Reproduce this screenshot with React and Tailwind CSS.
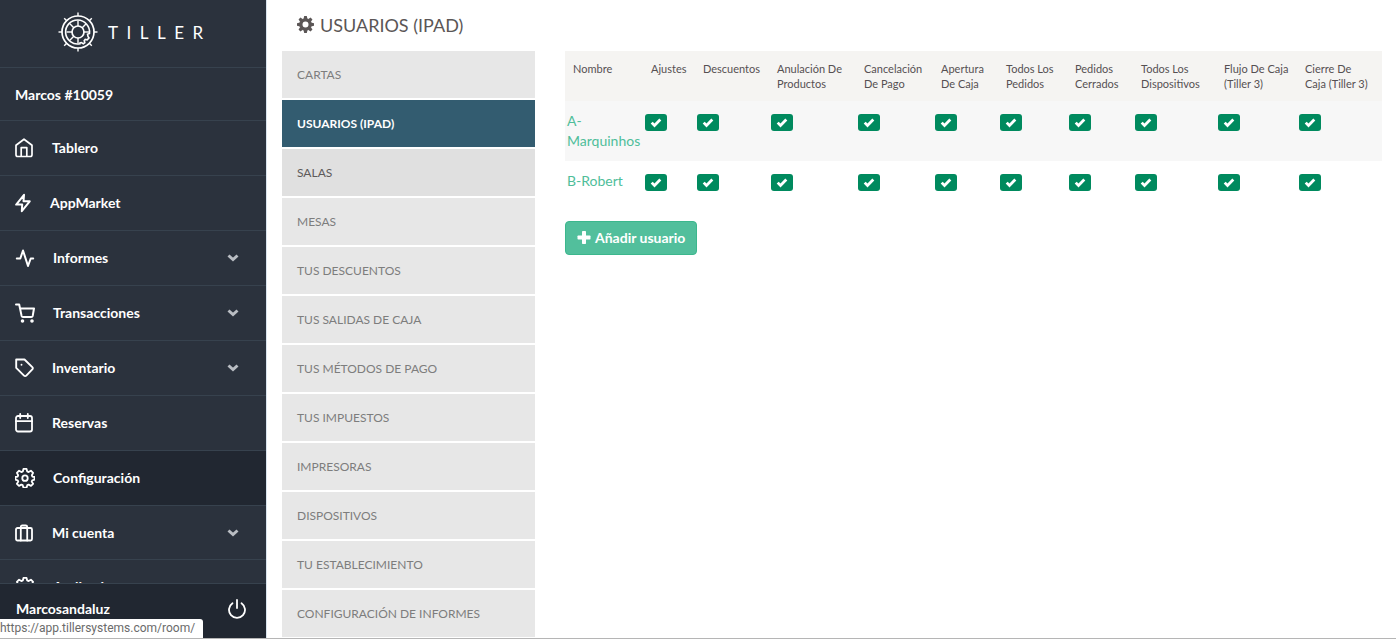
const menuItems = [
  { label: 'Tablero', icon: HomeIcon },
  { label: 'AppMarket', icon: BoltIcon },
  { label: 'Informes', icon: ActivityIcon, expandable: true },
  { label: 'Transacciones', icon: CartIcon, expandable: true },
  { label: 'Inventario', icon: TagIcon, expandable: true },
  { label: 'Reservas', icon: CalendarIcon },
  { label: 'Configuración', icon: GearIcon, active: true },
  { label: 'Mi cuenta', icon: CaseIcon, expandable: true, compact: true },
  { label: 'Auditoria', icon: GearIcon, compact: true },
]

const sections = [
  { label: 'CARTAS' },
  { label: 'USUARIOS (IPAD)', state: 'current' },
  { label: 'SALAS', state: 'highlighted' },
  { label: 'MESAS' },
  { label: 'TUS DESCUENTOS' },
  { label: 'TUS SALIDAS DE CAJA' },
  { label: 'TUS MÉTODOS DE PAGO' },
  { label: 'TUS IMPUESTOS' },
  { label: 'IMPRESORAS' },
  { label: 'DISPOSITIVOS' },
  { label: 'TU ESTABLECIMIENTO' },
  { label: 'CONFIGURACIÓN DE INFORMES' },
]

const sectionStyles = {
  current: 'bg-[#335c70] font-bold text-white',
  highlighted: 'bg-[#e0e0e0] text-[#5e5a5a]',
  normal: 'bg-[#e7e7e7] text-[#7d7d7d]',
}

const permissions = [
  { lines: ['Ajustes'], width: 'w-[52px]' },
  { lines: ['Descuentos'], width: 'w-[74px]' },
  { lines: ['Anulación De', 'Productos'], width: 'w-[87px]' },
  { lines: ['Cancelación', 'De Pago'], width: 'w-[77px]' },
  { lines: ['Apertura', 'De Caja'], width: 'w-[65px]' },
  { lines: ['Todos Los', 'Pedidos'], width: 'w-[69px]' },
  { lines: ['Pedidos', 'Cerrados'], width: 'w-[66px]' },
  { lines: ['Todos Los', 'Dispositivos'], width: 'w-[83px]' },
  { lines: ['Flujo De Caja', '(Tiller 3)'], width: 'w-[81px]' },
  { lines: ['Cierre De', 'Caja (Tiller 3)'], width: 'w-[85px]' },
]

const users = ['A-Marquinhos', 'B-Robert']

function Icon({ width, height = 20, strokeWidth = 2, className = '', children }) {
  return (
    <svg
      width={width}
      height={height}
      viewBox={`0 0 ${width} ${height}`}
      fill="none"
      stroke="currentColor"
      strokeWidth={strokeWidth}
      strokeLinecap="round"
      strokeLinejoin="round"
      aria-hidden="true"
      className={`shrink-0 ${className}`}
    >
      {children}
    </svg>
  )
}

function HomeIcon() {
  return (
    <Icon width={19} strokeWidth={1.7}>
      <path d="M1 7.3 9 1.2l8 6.100v9.500c0 1-.8 1.700-1.800 1.700H2.800C1.800 18.500 1 17.800 1 16.800z" />
      <path d="M6.200 18.200V9.600h5.600v8.600" />
    </Icon>
  )
}

function BoltIcon() {
  return (
    <Icon width={17} strokeWidth={2}>
      <path d="M9 1.800 1.200 11.600h6L6.800 18.200l7.900-9.900H8.500z" />
    </Icon>
  )
}

function ActivityIcon() {
  return (
    <Icon width={20}>
      <path d="M1.800 10.500h3.500L8 2.500l5 15.500 2.700-7.500h2.500" />
    </Icon>
  )
}

function CartIcon() {
  return (
    <Icon width={20}>
      <path d="M1 1.500h3.200l2.400 11.400c.2.700.7 1.100 1.400 1.100h8.300c.7 0 1.200-.4 1.400-1.100L19 5.500H5" />
      <circle cx="7.500" cy="18" r=".8" fill="currentColor" />
      <circle cx="17" cy="18" r=".8" fill="currentColor" />
    </Icon>
  )
}

function TagIcon() {
  return (
    <Icon width={19} strokeWidth={1.9}>
      <path d="M1.200 1.500h8.300l7.800 7.600c.7.700.7 1.600 0 2.300l-6 6.200c-.7.700-1.600.7-2.300 0L1.200 9.800z" />
      <path d="M6.500 6.700h.01" />
    </Icon>
  )
}

function CalendarIcon() {
  return (
    <Icon width={19} strokeWidth={1.8}>
      <rect x="1" y="3" width="16" height="15.500" rx="2" />
      <path d="M1 8.200h16M5.200 1v4M12.800 1v4" />
    </Icon>
  )
}

function GearIcon() {
  return (
    <svg
      width="20"
      height="20"
      viewBox="1 1 22 22"
      fill="none"
      stroke="currentColor"
      strokeWidth="2"
      strokeLinejoin="round"
      aria-hidden="true"
      className="shrink-0"
    >
      <path d="M10.300 2h3.400l.7 2.800 1.600.7 2.500-1.500L20.900 6.400 19.500 8.900l.6 1.500 2.400.5v3l-2.500.6-.6 1.500 1.500 2.400-2.300 2.300-2.600-1.400-1.500.6-.8 2.700h-3.400l-.8-2.700-1.500-.6-2.600 1.400-2.300-2.300 1.500-2.400-.6-1.500-2.500-.6v-3l2.400-.5.6-1.500-1.400-2.500L5.500 4l2.500 1.500 1.600-.7z" />
      <circle cx="12" cy="12.200" r="3" />
    </svg>
  )
}

function CaseIcon() {
  return (
    <Icon width={19} strokeWidth={1.8}>
      <rect x="1" y="5" width="16" height="12.500" rx="1.500" />
      <path d="M5.800 17.500V4c0-.8.6-1.500 1.500-1.500h3.400c.9 0 1.500.7 1.500 1.500v13.500" />
    </Icon>
  )
}

function ChevronIcon() {
  return (
    <Icon width={12} height={10} strokeWidth={3} className="text-[#b9bdc3]">
      <path strokeLinecap="butt" strokeLinejoin="miter" d="m1.500 2.500 4.500 4 4.500-4" />
    </Icon>
  )
}

function PowerIcon() {
  return (
    <Icon width={18} strokeWidth={1.8}>
      <path d="M9 1v8" />
      <path d="M4.500 4.200a8 8 0 1 0 9 0" />
    </Icon>
  )
}

function CheckIcon() {
  return (
    <svg
      width="12"
      height="10"
      viewBox="0 0 12 10"
      fill="none"
      stroke="currentColor"
      strokeWidth="2.800"
      aria-hidden="true"
      className="relative hidden text-white peer-checked:block"
    >
      <path d="m1.700 4.600 2.800 2.900 5.800-5.900" />
    </svg>
  )
}

function PlusIcon() {
  return (
    <svg width="14" height="14" viewBox="0 0 14 14" fill="currentColor" aria-hidden="true">
      <rect x="5" y="0" width="4" height="13" rx=".7" />
      <rect x=".5" y="4.500" width="13" height="4" rx=".7" />
    </svg>
  )
}

function CogIcon() {
  const teeth = [0, 45, 90, 135, 180, 225, 270, 315]
  return (
    <svg width="17" height="17" viewBox="-8.500 -8.500 17 17" fill="currentColor" aria-hidden="true">
      <circle r="4.600" fill="none" stroke="currentColor" strokeWidth="3.200" />
      {teeth.map((angle) => (
        <path key={angle} transform={`rotate(${angle})`} d="M-2-5.500-1.300-8.500h2.600L2-5.500z" />
      ))}
    </svg>
  )
}

function WheelLogo() {
  const spokes = [0, 45, 90, 135, 180, 225, 270, 315]
  return (
    <svg width="40" height="40" viewBox="-20 -20 40 40" fill="none" stroke="currentColor" aria-hidden="true">
      <circle r="16" strokeWidth="1.700" />
      <circle r="6" strokeWidth="1.700" />
      <path
        strokeWidth="1.600"
        d="M2 11.800A12 12 0 1 1 11.500 1.500l-2 .8.5 2.200 1 1.500-1.800 1.900-2-.5-1 1.200.6 2-1.500 1.100-1.900-1.200-1.400.4z"
      />
      {spokes.map((angle) => (
        <g key={angle} transform={`rotate(${angle})`}>
          <path strokeWidth="1.400" d="M16 0h3.500" />
          {angle !== 45 && <path strokeWidth="1.400" d="M6 0h5.500" />}
        </g>
      ))}
    </svg>
  )
}

function Sidebar() {
  return (
    <aside className="flex w-[267px] shrink-0 flex-col border-r border-[#d9e4ee] bg-[#2b323d] text-sm font-bold text-white">
      <a
        href="#tiller"
        className="flex h-[68px] shrink-0 items-center gap-2.5 border-b border-[#37424e] pb-1 pl-[58px]"
      >
        <WheelLogo />
        <span className="pt-1 text-[17px] font-normal tracking-[0.5em]">TILLER</span>
      </a>
      <div className="flex h-[53px] shrink-0 items-center border-b border-[#37424e] px-[15px] pt-0.5">
        Marcos #10059
      </div>

      <nav className="min-h-0 flex-1 overflow-hidden">
        {menuItems.map((item) => {
          const ItemIcon = item.icon
          return (
            <a
              key={item.label}
              href={`#${item.label}`}
              className={`flex items-center gap-[18px] border-b border-[#37424e] pr-[27px] pl-[15px] ${
                item.compact ? 'h-[54px]' : 'h-[55px]'
              } ${item.active ? 'bg-[#212731]' : ''}`}
            >
              <ItemIcon />
              <span className="flex-1">{item.label}</span>
              {item.expandable && <ChevronIcon />}
            </a>
          )
        })}
      </nav>

      <div className="flex h-[55px] shrink-0 items-start justify-between border-t border-[#37424e] bg-[#212731] px-4 pt-[15px]">
        <span>Marcosandaluz</span>
        <button type="button" aria-label="Salir" className="mr-1">
          <PowerIcon />
        </button>
      </div>
    </aside>
  )
}

function SectionList() {
  return (
    <nav className="flex flex-col gap-0.5 text-xs">
      {sections.map((section) => (
        <a
          key={section.label}
          href={`#${section.label}`}
          className={`flex h-[47px] shrink-0 items-center px-[15px] ${sectionStyles[section.state ?? 'normal']}`}
        >
          {section.label}
        </a>
      ))}
    </nav>
  )
}

function PermissionCheckbox({ label }) {
  return (
    <label className="relative flex h-[17px] w-[22px] items-center justify-center">
      <input
        type="checkbox"
        defaultChecked
        aria-label={label}
        className="peer absolute inset-0 appearance-none rounded-[3px] bg-[#bbbbbb] checked:bg-[#008a5e]"
      />
      <CheckIcon />
    </label>
  )
}

function UsersTable() {
  return (
    <table className="w-full table-fixed text-left text-[#555052]">
      <thead>
        <tr className="bg-[#f5f4f2] align-top text-[11px] leading-[15px]">
          <th className="w-[78px] py-2.5 pl-2 font-normal">Nombre</th>
          {permissions.map((permission) => (
            <th
              key={permission.lines.join(' ')}
              className={`py-2.5 pl-2 font-normal whitespace-nowrap ${permission.width}`}
            >
              {permission.lines.map((line) => (
                <span key={line} className="block">
                  {line}
                </span>
              ))}
            </th>
          ))}
        </tr>
      </thead>
      <tbody>
        {users.map((user) => (
          <tr key={user} className="align-top text-sm leading-5 odd:bg-[#f7f7f7]">
            <td className="py-2.5 pl-0.5">
              <a href={`#${user}`} className="text-[#4fbe9a]">
                {user}
              </a>
            </td>
            {permissions.map((permission) => (
              <td key={permission.lines.join(' ')} className="pt-[13px] pl-0.5">
                <PermissionCheckbox label={`${user}: ${permission.lines.join(' ')}`} />
              </td>
            ))}
          </tr>
        ))}
      </tbody>
    </table>
  )
}

export default function App() {
  return (
    <div className="relative flex h-screen flex-col bg-white font-['Lato',sans-serif]">
      <div className="flex min-h-0 flex-1">
        <Sidebar />
        <main className="min-w-0 flex-1 overflow-hidden pr-3.5 pl-[15px]">
          <h1 className="flex h-[51px] items-center gap-1.5 pb-0.5 pl-[15px] text-lg text-[#5b5656]">
            <CogIcon />
            USUARIOS (IPAD)
          </h1>
          <div className="grid grid-cols-[23%_1fr] gap-[30px]">
            <SectionList />
            <section>
              <UsersTable />
              <button
                type="button"
                className="mt-5 flex h-[34px] items-center gap-1 rounded-[4px] border border-[#3cb78d] bg-[#52bf9c] px-[11px] text-sm font-bold text-white"
              >
                <PlusIcon />
                Añadir usuario
              </button>
            </section>
          </div>
        </main>
      </div>
      <div className="h-0.5 shrink-0 border-t border-[#b5b5b5]" />
      <div className="absolute bottom-0.5 left-0 h-[19px] rounded-tr-[3px] bg-white pr-2 font-['Roboto',sans-serif] text-xs leading-[18px] text-[#6b6b6b]">
        https://app.tillersystems.com/room/
      </div>
    </div>
  )
}
